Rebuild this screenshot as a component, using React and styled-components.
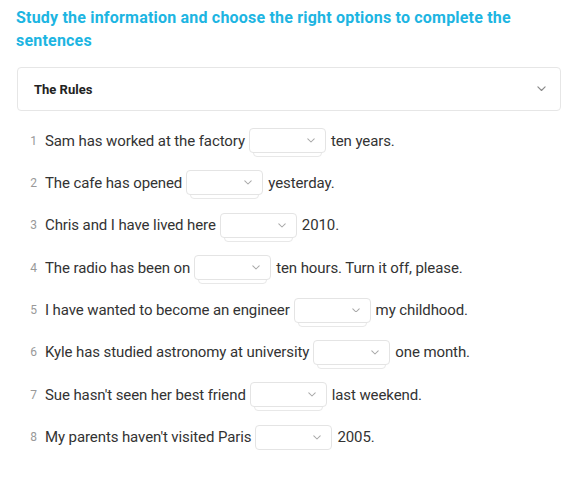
import styled, { createGlobalStyle } from "styled-components";

const GlobalStyle = createGlobalStyle`
  body {
    margin: 0;
    background: #fff;
    font-family: Roboto, "Liberation Sans", sans-serif;
  }
`;

const sentences = [
  ["Sam has worked at the factory", "ten years."],
  ["The cafe has opened", "yesterday."],
  ["Chris and I have lived here", "2010."],
  ["The radio has been on", "ten hours. Turn it off, please."],
  ["I have wanted to become an engineer", "my childhood."],
  ["Kyle has studied astronomy at university", "one month."],
  ["Sue hasn't seen her best friend", "last weekend."],
  ["My parents haven't visited Paris", "2005."],
];

function Chevron({ size = 8, color = "#a8a8a8" }) {
  return (
    <svg width={size} height={size * 0.6} viewBox="0 0 10 6" fill="none">
      <path d="M1 1l4 4 4-4" stroke={color} strokeWidth="1.3" strokeLinecap="round" strokeLinejoin="round" />
    </svg>
  );
}

export default function App() {
  return (
    <Page>
      <GlobalStyle />
      <Heading>Study the information and choose the right options to complete the sentences</Heading>
      <Accordion>
        <span>The Rules</span>
        <Chevron size={9} color="#8a8a8a" />
      </Accordion>
      <List>
        {sentences.map(([before, after], i) => (
          <Row key={i}>
            <Num>{i + 1}</Num>
            <span>{before}</span>
            <Select>
              <Chevron />
            </Select>
            <span>{after}</span>
          </Row>
        ))}
      </List>
    </Page>
  );
}

const Page = styled.div`
  padding: 6px 0 0 16px;
  width: 545px;
`;

const Heading = styled.h2`
  margin: 0;
  font-size: 16px;
  line-height: 23px;
  font-weight: 700;
  color: #1db5e2;
  letter-spacing: 0.2px;
`;

const Accordion = styled.div`
  margin: 15px 0 0 1px;
  height: 42px;
  border: 1px solid #e6e6e6;
  border-radius: 4px;
  display: flex;
  align-items: center;
  justify-content: space-between;
  padding: 0 14px 0 16px;
  font-size: 13px;
  font-weight: 700;
  color: #222;
`;

const List = styled.div`
  margin-top: 17px;
  display: flex;
  flex-direction: column;
  gap: 17.4px;
`;

const Row = styled.div`
  display: flex;
  align-items: center;
  height: 25px;
  font-size: 15px;
  color: #333;
  letter-spacing: -0.1px;
`;

const Num = styled.span`
  width: 29px;
  text-align: right;
  padding-right: 8px;
  box-sizing: border-box;
  font-size: 12px;
  color: #999;
`;

const Select = styled.span`
  position: relative;
  margin: 0 5px 0 4px;
  width: 77px;
  height: 25px;
  box-sizing: border-box;
  border: 1px solid #e4e4e4;
  border-radius: 4px;
  background: #fff;
  display: flex;
  align-items: center;
  justify-content: flex-end;
  padding-right: 10px;

  &::after {
    content: "";
    position: absolute;
    left: 3px;
    right: 3px;
    top: 4px;
    bottom: -5px;
    border: 1px solid #e8e8e8;
    border-radius: 4px;
    z-index: -1;
  }
`;
